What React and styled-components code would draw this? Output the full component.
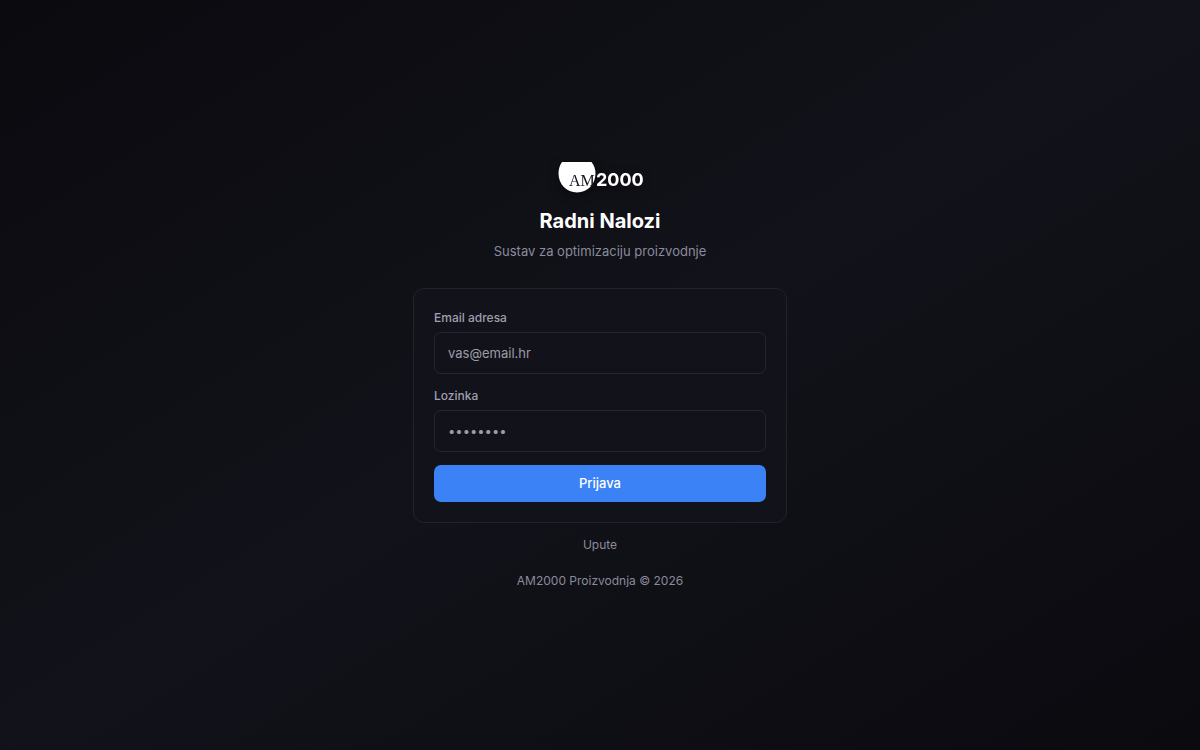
import React from "react";
import styled, { createGlobalStyle } from "styled-components";

const GlobalStyle = createGlobalStyle`
  *, *::before, *::after { box-sizing: border-box; }
  body {
    margin: 0;
    background: #0a0a0f;
    font-family: Inter, "Liberation Sans", sans-serif;
    -webkit-font-smoothing: antialiased;
  }
`;

const Page = styled.main`
  min-height: 100vh;
  display: flex;
  align-items: center;
  justify-content: center;
  padding: 16px;
  background: linear-gradient(to bottom right, #0a0a0f 0%, #12121a 50%, #0a0a0f 100%);
`;

const Column = styled.div`
  width: 100%;
  max-width: 374px;
  display: flex;
  flex-direction: column;
  align-items: center;
`;

const Header = styled.header`
  display: flex;
  flex-direction: column;
  align-items: center;
  margin-bottom: 27px;
`;

const LogoMark = styled.svg`
  display: block;
  margin-bottom: 14px;
  filter: drop-shadow(0 3px 5px rgba(0, 0, 0, 0.5));
`;

const MarkLetters = styled.text`
  font-family: "Liberation Serif", serif;
  font-size: 16px;
  fill: #14141c;
`;

const MarkDigits = styled.text`
  font-family: Inter, sans-serif;
  font-size: 18px;
  font-weight: 700;
  fill: #ffffff;
`;

const Title = styled.h1`
  margin: 0 0 7px;
  font-size: 20px;
  line-height: 26px;
  font-weight: 700;
  color: #ffffff;
`;

const Subtitle = styled.p`
  margin: 0;
  font-size: 13px;
  line-height: 20px;
  color: #8b8b9b;
`;

const Card = styled.form`
  width: 100%;
  display: flex;
  flex-direction: column;
  gap: 13px;
  padding: 20px;
  background: #12121a;
  border: 1px solid #22222d;
  border-radius: 11px;
`;

const Field = styled.div`
  display: flex;
  flex-direction: column;
  gap: 6px;
`;

const Label = styled.label`
  font-size: 12px;
  line-height: 17px;
  font-weight: 500;
  color: #9f9fae;
`;

const Input = styled.input`
  width: 100%;
  height: 42px;
  padding: 0 13px;
  font: inherit;
  font-size: 13px;
  color: #ffffff;
  background: #12121a;
  border: 1px solid #262631;
  border-radius: 7px;
  outline: none;

  &::placeholder { color: #9c9ca8; opacity: 1; }
  &:focus { border-color: #3b82f6; }
`;

const SubmitButton = styled.button`
  height: 37px;
  border: 0;
  border-radius: 7px;
  background: #3b82f6;
  color: #ffffff;
  font: inherit;
  font-size: 13px;
  font-weight: 500;
  cursor: pointer;
`;

const HelpLink = styled.a`
  margin-top: 13px;
  font-size: 12px;
  line-height: 18px;
  color: #8b8b9b;
  text-decoration: none;
`;

const Footer = styled.footer`
  margin-top: 18px;
  font-size: 12px;
  line-height: 18px;
  color: #8b8b9b;
`;

function Logo() {
  return (
    <LogoMark width="90" height="33" viewBox="-2 0 90 33" role="img" aria-label="AM2000">
      <path d="M5 1 H34.5 C37 4 38.5 8 38.5 12.5 C38.5 23 30.5 31.5 20 31.5 C9.5 31.5 1.5 23 1.5 12.5 C1.5 8 2.8 4 5 1 Z" fill="#ffffff" />
      <MarkLetters x="12" y="25">AM</MarkLetters>
      <MarkDigits x="39" y="25">2000</MarkDigits>
    </LogoMark>
  );
}

export default function App() {
  return (
    <>
      <GlobalStyle />
      <Page>
        <Column>
          <Header>
            <Logo />
            <Title>Radni Nalozi</Title>
            <Subtitle>Sustav za optimizaciju proizvodnje</Subtitle>
          </Header>
          <Card onSubmit={(event) => event.preventDefault()}>
            <Field>
              <Label htmlFor="email">Email adresa</Label>
              <Input id="email" type="email" placeholder="vas@email.hr" />
            </Field>
            <Field>
              <Label htmlFor="password">Lozinka</Label>
              <Input id="password" type="password" placeholder="••••••••" />
            </Field>
            <SubmitButton type="submit">Prijava</SubmitButton>
          </Card>
          <HelpLink href="#upute">Upute</HelpLink>
          <Footer>AM2000 Proizvodnja © 2026</Footer>
        </Column>
      </Page>
    </>
  );
}
